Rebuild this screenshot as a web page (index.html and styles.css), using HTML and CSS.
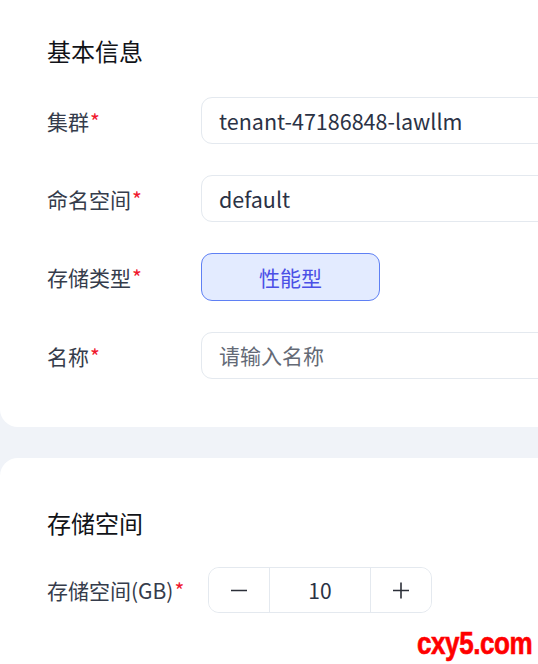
FILE: index.html
```html
<!DOCTYPE html>
<html lang="zh-CN">
<head>
<meta charset="utf-8">
<title>存储</title>
<link rel="stylesheet" href="styles.css">
</head>
<body>
<div class="page">
  <section class="card card-top">
    <h2 class="card-title">基本信息</h2>
    <div class="form">
      <div class="row">
        <div class="label">集群<span class="req">*</span></div>
        <div class="field">tenant-47186848-lawllm</div>
      </div>
      <div class="row">
        <div class="label">命名空间<span class="req">*</span></div>
        <div class="field">default</div>
      </div>
      <div class="row">
        <div class="label">存储类型<span class="req">*</span></div>
        <div class="choices">
          <button class="choice active" type="button">性能型</button>
        </div>
      </div>
      <div class="row">
        <div class="label">名称<span class="req">*</span></div>
        <div class="field placeholder">请输入名称</div>
      </div>
    </div>
  </section>
  <section class="card card-bottom">
    <h2 class="card-title">存储空间</h2>
    <div class="form">
      <div class="row row-wide">
        <div class="label">存储空间(GB)<span class="req">*</span></div>
        <div class="stepper">
          <button class="step" type="button" aria-label="减少">
            <svg width="18" height="18" viewBox="0 0 18 18"><path d="M1 9.5h16" stroke="#2b2f38" stroke-width="1.6" fill="none"/></svg>
          </button>
          <div class="step-value">10</div>
          <button class="step" type="button" aria-label="增加">
            <svg width="18" height="18" viewBox="0 0 18 18"><path d="M1 9.5h16M9 1.5v16" stroke="#2b2f38" stroke-width="1.6" fill="none"/></svg>
          </button>
        </div>
      </div>
    </div>
  </section>
</div>
<div class="watermark">cxy5.com</div>
</body>
</html>
```

FILE: styles.css
```css
html, body {
  margin: 0;
  padding: 0;
  overflow: hidden;
  background: #f0f3f8;
}
body {
  font-family: "Noto Sans CJK SC", "Noto Sans", sans-serif;
  color: #2f3646;
  width: 538px;
  height: 664px;
  position: relative;
}
.page {
  width: 900px;
  display: flex;
  flex-direction: column;
  gap: 31px;
}
.card {
  background: #ffffff;
  padding: 0 0 0 47px;
}
.card-top {
  padding-top: 35px;
  padding-bottom: 48px;
  border-radius: 0 0 18px 18px;
}
.card-bottom {
  padding-top: 49px;
  padding-bottom: 60px;
  border-radius: 18px 18px 0 0;
}
.card-title {
  margin: 0;
  font-size: 24px;
  line-height: 32px;
  font-weight: 400;
  color: #111318;
}
.form {
  display: flex;
  flex-direction: column;
  gap: 31px;
  margin-top: 30px;
}
.card-bottom .form {
  margin-top: 28px;
}
.row {
  display: grid;
  grid-template-columns: 154px 1fr;
  align-items: center;
}
.row-wide {
  grid-template-columns: 161px 1fr;
}
.label {
  font-size: 21px;
  line-height: 28px;
  color: #353c4b;
}
.req {
  color: #f0182e;
  margin-left: 1px;
}
.field {
  height: 47px;
  box-sizing: border-box;
  border: 1px solid #e4e9ef;
  border-radius: 11px;
  padding: 0 17px;
  font-size: 21.5px;
  line-height: 45px;
  color: #2b3245;
  width: 600px;
}
.placeholder {
  font-size: 21px;
  color: #646a76;
}
.choices {
  display: flex;
  gap: 12px;
}
.choice {
  width: 179px;
  height: 48px;
  box-sizing: border-box;
  border-radius: 11px;
  font-family: inherit;
  font-size: 21px;
  background: #ffffff;
  border: 1px solid #e4e9ef;
  color: #2b3245;
  padding: 0;
}
.choice.active {
  background: #e3ebff;
  border-color: #5f80f4;
  color: #4a50e6;
}
.stepper {
  display: flex;
  width: 224px;
  height: 46px;
  box-sizing: border-box;
  border: 1px solid #e4e9ef;
  border-radius: 11px;
  overflow: hidden;
}
.step {
  width: 60px;
  border: 0;
  background: #ffffff;
  padding: 0;
  display: flex;
  align-items: center;
  justify-content: center;
}
.step-value {
  flex: 1;
  border-left: 1px solid #e4e9ef;
  border-right: 1px solid #e4e9ef;
  display: flex;
  align-items: center;
  justify-content: center;
  font-size: 21px;
  color: #2b3245;
}
.watermark {
  position: absolute;
  right: 6px;
  bottom: 4px;
  font-family: "Liberation Sans", "DejaVu Sans", sans-serif;
  font-weight: 700;
  font-size: 31px;
  line-height: 32px;
  color: #ff0000;
  letter-spacing: -0.5px;
  transform: scaleX(0.84);
  transform-origin: right bottom;
  -webkit-text-stroke: 0.6px #ff0000;
}
```
